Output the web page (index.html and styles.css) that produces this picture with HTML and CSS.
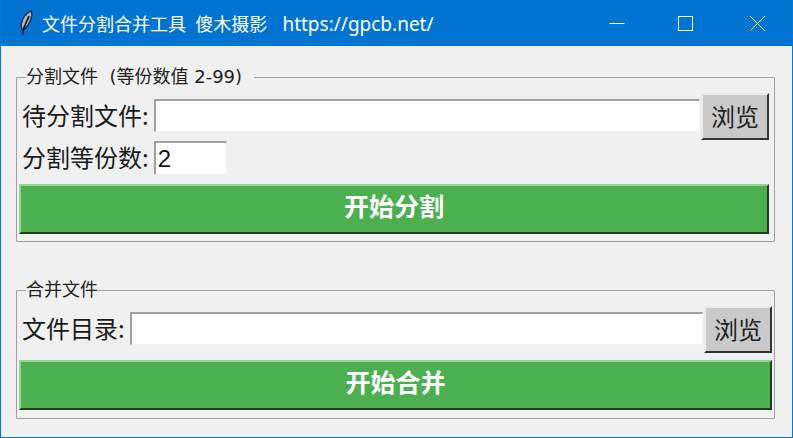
FILE: index.html
```html
<!DOCTYPE html>
<html lang="zh-CN">
<head>
    <meta charset="UTF-8">
    <meta name="viewport" content="width=device-width, initial-scale=1.0">
    <title>文件分割合并工具</title>
    <link rel="stylesheet" href="styles.css">
</head>
<body>
    <div class="window">
        <div class="titlebar">
            <svg class="app-icon" width="16" height="26" viewBox="0 0 16 26">
                <path d="M13.500 1 C8.500 2.500 4.500 7.500 3.500 13 C3 16 3 18.500 4.500 20 C9 18 12.500 12 14 5 Z" fill="#a9b8ca" stroke="#222f45" stroke-width="1.400"/>
                <path d="M11 6 L5 20 L4.500 25" fill="none" stroke="#10141b" stroke-width="1.700"/>
            </svg>
            <div class="title">文件分割合并工具  傻木摄影   <span class="title-url">https://gpcb.net/</span></div>
            <div class="controls">
                <svg class="control" width="46" height="46" viewBox="0 0 46 46"><path d="M18.500 23.500 H33.500" stroke="#fff" fill="none"/></svg>
                <svg class="control" width="46" height="46" viewBox="0 0 46 46"><rect x="16.500" y="16.500" width="14" height="14" stroke="#fff" fill="none"/></svg>
                <svg class="control" width="46" height="46" viewBox="0 0 46 46"><path d="M17 16 L32 31 M32 16 L17 31" stroke="#fff" fill="none"/></svg>
            </div>
        </div>

        <div class="content">
            <fieldset class="group group-split">
                <legend>分割文件  (等份数值 2-99)  </legend>
                <div class="row">
                    <label class="field-label" for="split-file">待分割文件:</label>
                    <input type="text" id="split-file" class="entry entry-wide">
                    <button class="btn btn-browse">浏览</button>
                </div>
                <div class="row row-count">
                    <label class="field-label" for="split-count">分割等份数:</label>
                    <input type="text" id="split-count" class="entry entry-count" value="2">
                </div>
                <button class="btn btn-start">开始分割</button>
            </fieldset>

            <fieldset class="group group-merge">
                <legend>合并文件</legend>
                <div class="row">
                    <label class="field-label" for="merge-dir">文件目录:</label>
                    <input type="text" id="merge-dir" class="entry entry-wide">
                    <button class="btn btn-browse">浏览</button>
                </div>
                <button class="btn btn-start">开始合并</button>
            </fieldset>
        </div>
    </div>
</body>
</html>
```

FILE: styles.css
```css
* {
    margin: 0;
    padding: 0;
    box-sizing: border-box;
    font-family: "Noto Sans CJK SC", sans-serif;
}

body {
    background-color: #f0f0f0;
    overflow: hidden;
}

.window {
    width: 793px;
    height: 438px;
    border: 1px solid #0078d7;
    border-top: none;
    background-color: #f0f0f0;
}

.titlebar {
    display: flex;
    align-items: center;
    height: 46px;
    padding-left: 17px;
    background-color: #0173d1;
    color: white;
}

.app-icon {
    flex: none;
}

.title {
    flex: 1;
    margin-left: 8px;
    font-family: "Noto Sans", "Noto Sans CJK SC", sans-serif;
    font-size: 18px;
    white-space: pre;
}

.title-url {
    font-family: "Noto Sans", sans-serif;
    font-size: 19px;
    margin-left: 1px;
}

.controls {
    display: flex;
    margin-right: 13px;
    gap: 25px;
}

.content {
    padding: 19px 17px 0 15px;
}

.group {
    border: 1px solid #a0a0a0;
    border-radius: 1px;
    padding: 4px 2px 0 2px;
}

.group legend {
    margin-left: 7px;
    font-family: "DejaVu Sans", "Noto Sans CJK SC", sans-serif;
    font-size: 18px;
    line-height: 24px;
    color: #222222;
    white-space: pre;
}

.group-split {
    height: 177px;
    padding-right: 5px;
}

.group-merge {
    height: 141px;
    margin-top: 36px;
}

.row {
    display: flex;
    align-items: flex-start;
}

.field-label {
    margin-top: 6px;
    padding-left: 3px;
    font-size: 24px;
    line-height: 32px;
    color: #1a1a1a;
    white-space: nowrap;
}

.row-count .field-label {
    margin-top: 0;
}

.entry {
    height: 33px;
    margin-top: 6px;
    margin-left: 5px;
    padding: 0 2px;
    border: 1px solid #f2f2f2;
    border-top: 2px solid #a0a0a0;
    border-left: 2px solid #a0a0a0;
    background-color: white;
    font-size: 24px;
    color: #111111;
}

.entry-wide {
    flex: 1;
    min-width: 0;
}

.entry-count {
    width: 73px;
    height: 34px;
    margin-top: 0;
    font-family: "Liberation Sans", sans-serif;
}

.btn {
    display: block;
    border: 2px solid;
    border-color: #ececec #333333 #333333 #ececec;
    background-color: #c9c9c9;
    color: #222222;
}

.btn-browse {
    width: 68px;
    height: 47px;
    margin-left: 1px;
    padding-bottom: 2px;
    font-size: 24px;
}

.btn-start {
    width: 100%;
    height: 50px;
    padding-bottom: 8px;
    background-color: #4caf50;
    border-color: #8fd592 #1f3d20 #1f3d20 #8fd592;
    color: white;
    font-size: 25px;
    font-weight: bold;
}

.row-count {
    height: 44px;
    padding-top: 1px;
}

.group-merge .btn-start {
    margin-top: 7px;
}
```
